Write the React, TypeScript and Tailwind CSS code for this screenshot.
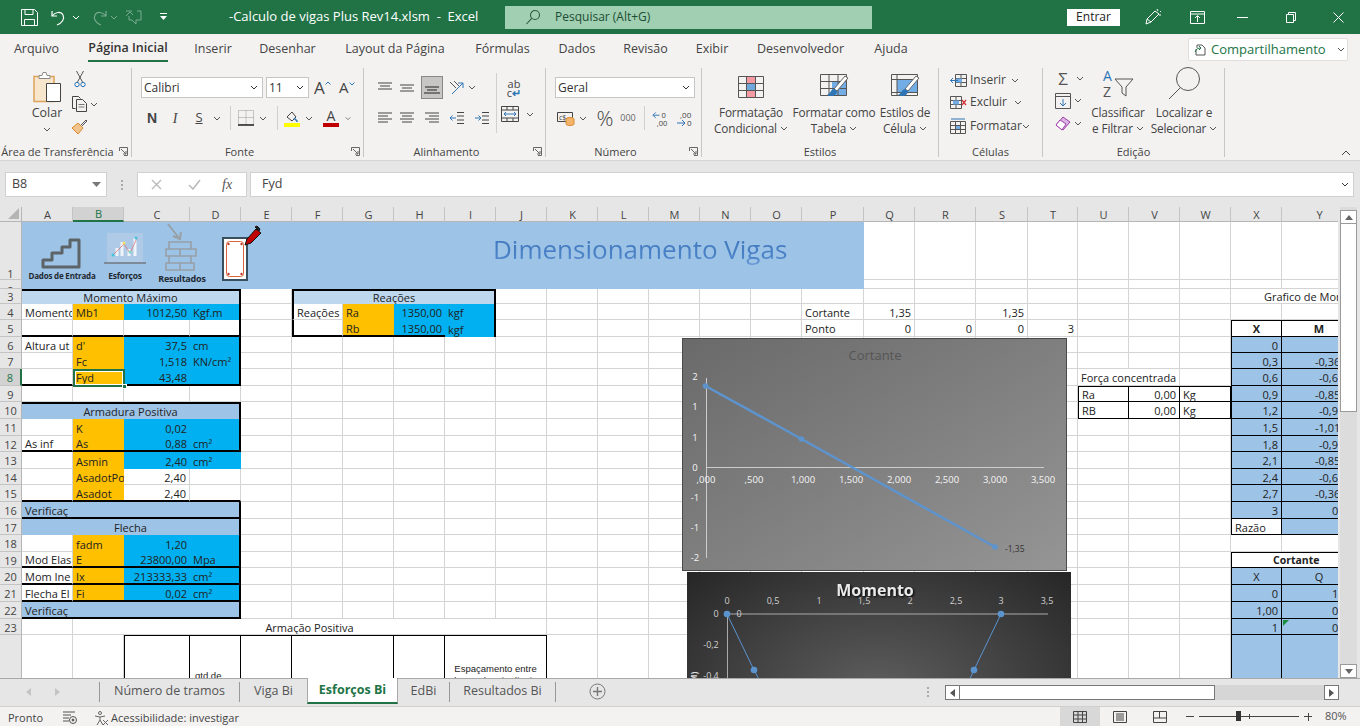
import React from 'react';

const Chev = ({ c = '#555' }: { c?: string }) => (
  <svg width="8" height="5" viewBox="0 0 8 5" fill="none"><path d="M1 1l3 3 3-3" stroke={c} strokeWidth="1" /></svg>
);

const L = ({ ys, xs, c = '#444' }: { ys: number[]; xs: [number, number][]; c?: string }) => (
  <svg width="16" height="14" viewBox="0 0 16 14" fill="none">
    {ys.map((y, i) => <path key={i} d={`M${xs[i][0]} ${y}H${xs[i][1]}`} stroke={c} strokeWidth="1" />)}
  </svg>
);

const Launcher = () => (
  <svg width="9" height="9" viewBox="0 0 9 9" fill="none" stroke="#666">
    <path d="M.5 4V.5h8v8H5" /><path d="M2 2l5 5M7 4v3H4" />
  </svg>
);

const Group = ({ w, label, launcher, children }: { w: string; label: string; launcher?: boolean; children: React.ReactNode }) => (
  <div className={`${w} h-[96px] pt-[3px] pb-[4px] shrink-0`}>
    <div className="relative h-full flex flex-col border-r border-r-[#c8c6c4]">
      <div className="h-[79px] flex">{children}</div>
      <div className={`h-[10px] leading-[10px] text-[11px] text-[#444] text-center whitespace-nowrap ${launcher ? 'pr-[16px]' : ''}`}>{label}</div>
      {launcher && <div className="absolute right-[3px] bottom-[1px]"><Launcher /></div>}
    </div>
  </div>
);

const Combo = ({ w, text }: { w: string; text: string }) => (
  <div className={`${w} h-[21px] bg-white border border-[#c8c6c4] flex items-center justify-between pl-[2px] pr-[4px] text-[12px] text-[#333]`}>
    <span>{text}</span><Chev c="#333" />
  </div>
);

const tabs: [string, string][] = [
  ['Arquivo', 'ml-[14px] w-[45px]'], ['Página Inicial', 'ml-[29px] w-[80px]'], ['Inserir', 'ml-[27px] w-[36px]'],
  ['Desenhar', 'ml-[29px] w-[55px]'], ['Layout da Página', 'ml-[30px] w-[100px]'], ['Fórmulas', 'ml-[31px] w-[53px]'],
  ['Dados', 'ml-[29px] w-[38px]'], ['Revisão', 'ml-[27px] w-[45px]'], ['Exibir', 'ml-[28px] w-[32px]'],
  ['Desenvolvedor', 'ml-[29px] w-[87px]'], ['Ajuda', 'ml-[30px] w-[34px]'],
];

const TitleBar = () => (
  <div className="h-[34px] bg-[#217346] flex items-center text-white shrink-0">
    <div className="ml-[21px] w-[17px]">
      <svg width="17" height="17" viewBox="0 0 17 17" fill="none" stroke="#fff"><path d="M.5.5h13l3 3v13H.5z" /><path d="M4 .5v5h8v-5M3.5 16.500v-6h10v6" /></svg>
    </div>
    <div className="ml-[12px] w-[20px]">
      <svg width="20" height="17" viewBox="0 0 20 17" fill="none" stroke="#fff" strokeWidth="1.200"><path d="M2 2v5h5" /><path d="M2 7c3-4 9-5 11-1s-1 8-6 10" /></svg>
    </div>
    <div className="ml-[2px] w-[10px]"><Chev c="#fff" /></div>
    <div className="ml-[8px] w-[18px] opacity-40">
      <svg width="18" height="17" viewBox="0 0 18 17" fill="none" stroke="#fff" strokeWidth="1.200"><path d="M16 2v5h-5" /><path d="M16 7c-3-4-9-5-11-1s1 8 6 10" /></svg>
    </div>
    <div className="ml-[2px] w-[10px] opacity-40"><Chev c="#fff" /></div>
    <div className="ml-[5px] w-[18px] opacity-40">
      <svg width="17" height="17" viewBox="0 0 17 17" fill="none" stroke="#fff"><path d="M1 2h6M12 2h4v9h-5v4l-4-4H4V7" /><path d="M1 7l4-4 3 3" /></svg>
    </div>
    <div className="ml-[16px] w-[12px]">
      <svg width="9" height="8" viewBox="0 0 9 8" fill="#fff"><path d="M1 0h7v1H1zM1 3h7L4.500 7z" /></svg>
    </div>
    <div className="ml-[58px] w-[222px] text-[13px] text-center whitespace-nowrap">-Calculo de vigas Plus Rev14.xlsm&nbsp; -&nbsp; Excel</div>
    <div className="ml-[54px] w-[367px] h-[23px] bg-[#a0cfb2] flex items-center text-[#1d4d33]">
      <div className="ml-[20px] w-[30px]">
        <svg width="16" height="16" viewBox="0 0 16 16" fill="none" stroke="#2c5a40" strokeWidth="1.100"><circle cx="10" cy="6" r="4.500" /><path d="M6.700 9.300L1.500 15" /></svg>
      </div>
      <span className="text-[12px]">Pesquisar (Alt+G)</span>
    </div>
    <div className="ml-[195px] w-[53px] h-[17px] bg-white text-[#222] text-[12px] flex items-center justify-center">Entrar</div>
    <div className="ml-[25px] w-[18px]">
      <svg width="17" height="18" viewBox="0 0 17 18" fill="none" stroke="#fff"><path d="M1 16l1-5 8-8 4 3-8 8z" /><path d="M2 11l4 3M12 1l1 2M15 4l1-1M14 7h2" /></svg>
    </div>
    <div className="ml-[27px] w-[16px]">
      <svg width="15" height="13" viewBox="0 0 15 13" fill="none" stroke="#fff"><path d="M.5.500h14v12H.5zM.5 3h14M7.500 11V5M5 7l2.500-2.500L10 7" /></svg>
    </div>
    <div className="ml-[31px] w-[11px] h-px bg-white"></div>
    <div className="ml-[38px] w-[10px]">
      <svg width="10" height="11" viewBox="0 0 10 11" fill="none" stroke="#fff"><path d="M.5 2.500h7v8h-7zM2.500 2.500V.5h7v8H7.500" /></svg>
    </div>
    <div className="ml-[37px] w-[11px]">
      <svg width="11" height="11" viewBox="0 0 11 11" fill="none" stroke="#fff"><path d="M.5.5l10 10M10.500.5l-10 10" /></svg>
    </div>
  </div>
);

const TabsRow = () => (
  <div className="h-[31px] bg-[#f3f2f1] flex items-start shrink-0 text-[12.5px] text-[#444]">
    {tabs.map(([t, c]) => (
      <div key={t} className={`${c} h-[28px] pt-[3px] flex items-center justify-center whitespace-nowrap ${t === 'Página Inicial' ? 'font-semibold text-[#333] border-b-[2px] border-b-[#217346]' : ''}`}>{t}</div>
    ))}
    <div className="ml-auto mr-[12px] mt-[4px] w-[160px] h-[23px] bg-white border border-[#e1dfdd] rounded-[2px] flex items-center text-[#217346]">
      <div className="ml-[5px] w-[17px]">
        <svg width="13" height="12" viewBox="0 0 13 12" fill="none" stroke="#555"><path d="M3 4V1h5l3 3v7H2V5" /><path d="M1 8c1-3 3-4 6-4M5 2l2 2-2 2" stroke="#217346" /></svg>
      </div>
      <span className="text-[13px] whitespace-nowrap w-[120px] pt-px">Compartilhamento</span>
      <div className="ml-[6px]"><Chev /></div>
    </div>
  </div>
);

const Clipboard = () => (
  <Group w="w-[132px]" label="Área de Transferência" launcher>
    <div className="ml-[22px] w-[50px] flex flex-col items-center pt-[4px]">
      <svg width="30" height="32" viewBox="0 0 30 32" fill="none">
        <path d="M2 4.500h20v25H2z" fill="#f8e6cc" stroke="#dba35b" strokeWidth="1.500" />
        <path d="M7 3.500h3l1-3h3l1 3h3v3H7z" fill="#fff" stroke="#888" />
        <path d="M14.500 11.500h14v18h-14z" fill="#fff" stroke="#444" />
      </svg>
      <div className="text-[12.5px] text-[#444] leading-[16px] mt-[1px]">Colar</div>
      <div className="mt-[6px]"><Chev /></div>
    </div>
    <div className="w-[30px] flex flex-col pt-[2px]">
      <div className="h-[20px] ml-[2px]">
        <svg width="12" height="18" viewBox="0 0 12 18" fill="none"><path d="M2.500 1l6 11M9.500 1l-6 11" stroke="#555" /><circle cx="3" cy="14.500" r="2.200" stroke="#2e75b6" /><circle cx="9" cy="14.500" r="2.200" stroke="#2e75b6" /></svg>
      </div>
      <div className="h-[25px] flex items-center gap-[3px] pt-[3px]">
        <svg width="15" height="16" viewBox="0 0 15 16" fill="none" stroke="#444"><path d="M3.500 12.500H.5v-12h6l2 2" /><path d="M4.500 3.500h6l4 4v8h-10z" /><path d="M6.500 8.500h6M6.500 11h6" stroke="#777" /></svg>
        <Chev />
      </div>
      <div className="h-[20px] mt-[4px] ml-[-1px]">
        <svg width="17" height="16" viewBox="0 0 17 16" fill="none"><path d="M1 9l6-5 5 5-5 6z" fill="#f1c48c" stroke="#d98a2e" /><path d="M10 6l5-5 1 1-5 5" stroke="#555" /></svg>
      </div>
    </div>
  </Group>
);

const Sep = ({ w }: { w: string }) => <div className={`${w} flex justify-center`}><div className="w-px h-[24px] bg-[#d2d0ce]"></div></div>;

const Fonte = () => (
  <Group w="w-[232px]" label="Fonte" launcher>
    <div className="flex flex-col ml-[9px] pt-[9px]">
      <div className="flex items-center">
        <Combo w="w-[122px]" text="Calibri" />
        <div className="ml-[3px]"><Combo w="w-[43px]" text="11" /></div>
        <div className="ml-[5px] w-[25px] flex items-start text-[17px] leading-none text-[#444]"><span>A</span><svg className="mt-[2px]" width="6" height="4" viewBox="0 0 6 4" fill="none" stroke="#2e75b6"><path d="M.5 3.500L3 1l2.500 2.500" /></svg></div>
        <div className="w-[20px] flex items-start text-[15px] leading-none text-[#444]"><span>A</span><svg className="mt-[2px]" width="6" height="4" viewBox="0 0 6 4" fill="none" stroke="#2e75b6"><path d="M.5.500L3 3 5.500.5" /></svg></div>
      </div>
      <div className="flex items-center h-[24px] mt-[8px] text-[#444]">
        <div className="w-[22px] text-center font-bold text-[14px] font-['Liberation_Sans',sans-serif]">N</div>
        <div className="w-[24px] text-center italic text-[14px] font-['Liberation_Serif',serif]">I</div>
        <div className="w-[24px] text-center underline text-[13px]">S</div>
        <div className="w-[12px] flex justify-center"><Chev /></div>
        <Sep w="w-[14px]" />
        <div className="w-[18px] flex justify-center">
          <svg width="16" height="16" viewBox="0 0 16 16" fill="none"><path d="M.5.5h15v14H.5zM8 .5v14M.5 7.500h15" stroke="#999" strokeDasharray="1 1" /><path d="M0 15h16" stroke="#222" strokeWidth="1.500" /></svg>
        </div>
        <div className="w-[16px] flex justify-center"><Chev /></div>
        <Sep w="w-[12px]" />
        <div className="w-[18px] flex justify-center">
          <svg width="16" height="17" viewBox="0 0 16 17" fill="none"><path d="M3 7l5-5 4 5-4 4z" stroke="#444" /><path d="M10 8l3 3v1" stroke="#2e75b6" strokeWidth="1.500" /><path d="M0 13h16v4H0z" fill="#ffff00" /></svg>
        </div>
        <div className="w-[16px] flex justify-center"><Chev /></div>
        <div className="w-[28px] flex flex-col items-center leading-[12px]">
          <span className="text-[14px]">A</span>
          <div className="w-[16px] h-[4px] bg-[#c00000] mt-[1px]"></div>
        </div>
        <div className="w-[6px] flex justify-center"><Chev /></div>
      </div>
    </div>
  </Group>
);

const Box = ({ children, sel }: { children: React.ReactNode; sel?: boolean }) => (
  <div className={`w-[22px] h-[23px] flex items-center justify-center ${sel ? 'bg-[#c8c6c4] border border-[#8a8886]' : ''}`}>{children}</div>
);

const arrowIndent = (dir: number) => (
  <svg width="16" height="14" viewBox="0 0 16 14" fill="none">
    <path d="M9 1.500h7M9 5h7M9 9h7M9 12.500h7" stroke="#444" transform="translate(-1 0)" />
    {dir < 0 ? <path d="M7 7H1M3.500 4.500L1 7l2.500 2.500" stroke="#2e75b6" /> : <path d="M1 7h6M4.500 4.500L7 7l-2.500 2.500" stroke="#2e75b6" />}
  </svg>
);

const Alinhamento = () => (
  <Group w="w-[182px]" label="Alinhamento" launcher>
    <div className="flex ml-[10px] pt-[8px]">
      <div className="w-[122px] flex flex-col">
        <div className="flex items-center">
          <Box><L ys={[2, 5, 8]} xs={[[1, 15], [3, 13], [1, 15]]} /></Box>
          <Box><L ys={[4, 7, 10]} xs={[[1, 15], [3, 13], [1, 15]]} /></Box>
          <div className="ml-[3px]"><Box sel><L ys={[6, 9, 12]} xs={[[1, 15], [3, 13], [0, 16]]} c="#222" /></Box></div>
          <div className="ml-[3px]"><Box>
            <svg width="18" height="16" viewBox="0 0 18 16" fill="none"><path d="M2 2l6 6M6 1l6 6" stroke="#555" /><path d="M4 14L15 3M10 3h5v5" stroke="#2e75b6" /></svg>
          </Box></div>
          <div className="w-[8px] flex justify-center"><Chev /></div>
        </div>
        <div className="flex items-center mt-[7px]">
          <Box><L ys={[2, 5, 8, 11]} xs={[[1, 15], [1, 11], [1, 15], [1, 11]]} /></Box>
          <Box><L ys={[2, 5, 8, 11]} xs={[[1, 15], [3, 13], [1, 15], [3, 13]]} /></Box>
          <div className="ml-[3px]"><Box><L ys={[2, 5, 8, 11]} xs={[[1, 15], [5, 15], [1, 15], [5, 15]]} /></Box></div>
          <div className="ml-[3px]"><Box>{arrowIndent(-1)}</Box></div>
          <div className="ml-[3px]"><Box>{arrowIndent(1)}</Box></div>
        </div>
      </div>
      <div className="w-px h-[60px] bg-[#d2d0ce] mt-[-3px]"></div>
      <div className="flex flex-col">
        <div className="ml-[6px] w-[22px] h-[23px] flex items-center justify-center">
          <div className="relative text-[11px] leading-[9px] text-[#444] text-center">
            <div>ab</div><div className="text-left">c<span className="text-[#2e75b6] font-bold">↵</span></div>
          </div>
        </div>
        <div className="flex items-center mt-[7px] ml-[3px]">
          <div className="w-[20px] flex justify-center">
            <svg width="18" height="16" viewBox="0 0 18 16" fill="none" stroke="#444"><path d="M.5.500h17v15H.5zM.5 4h17M.5 12h17M6 .5V4M12 .5V4M6 12v3.500M12 12v3.500" /><path d="M3 8h12M5 6L3 8l2 2M13 6l2 2-2 2" stroke="#2e75b6" /></svg>
          </div>
          <div className="w-[20px] flex justify-center"><Chev /></div>
        </div>
      </div>
    </div>
  </Group>
);

const Numero = () => (
  <Group w="w-[156px]" label="Número" launcher>
    <div className="flex flex-col ml-[9px] pt-[9px] text-[#444]">
      <Combo w="w-[140px]" text="Geral" />
      <div className="flex items-center h-[24px] mt-[8px]">
        <div className="w-[21px] flex justify-center">
          <svg width="18" height="15" viewBox="0 0 18 15" fill="none"><path d="M.5 1.500h15v9H.5z" stroke="#444" /><text x="2" y="9" fontSize="7" fill="#444" fontFamily="Open Sans">c$</text><ellipse cx="13" cy="8" rx="4" ry="1.500" fill="#f2b56b" stroke="#d98a2e" /><path d="M9 8v5c0 2 8 2 8 0V8" fill="#f2b56b" stroke="#d98a2e" /></svg>
        </div>
        <div className="w-[14px] flex justify-center"><Chev /></div>
        <div className="w-[30px] text-center text-[21px] leading-none font-light">%</div>
        <div className="w-[16px] text-center text-[9px] text-[#666]">000</div>
        <Sep w="w-[16px]" />
        <div className="w-[16px] flex justify-center">
          <svg width="17" height="17" viewBox="0 0 17 17" fill="none"><path d="M8 5H1M4 2L1 5l3 3" stroke="#2e75b6" /><text x="10" y="8" fontSize="8" fill="#444" fontFamily="Open Sans">0</text><text x="5" y="16" fontSize="8" fill="#444" fontFamily="Open Sans">,00</text></svg>
        </div>
        <div className="w-[34px] flex justify-center">
          <svg width="17" height="17" viewBox="0 0 17 17" fill="none"><path d="M0 13h8M5 10l3 3-3 3" stroke="#2e75b6" /><text x="3" y="8" fontSize="8" fill="#444" fontFamily="Open Sans">,00</text><text x="10" y="16" fontSize="8" fill="#444" fontFamily="Open Sans">0</text></svg>
        </div>
      </div>
    </div>
  </Group>
);

const BigBtn = ({ w, a, b, icon }: { w: string; a: string; b: string; icon: React.ReactNode }) => (
  <div className={`${w} flex flex-col items-center text-[11.8px] tracking-[-0.15px] text-[#444] leading-[16px] whitespace-nowrap`}>
    <div className="h-[32px] flex items-end justify-center">{icon}</div>
    <div className="mt-[4px]">{a}</div>
    <div className="flex items-center gap-[3px]">{b}<Chev /></div>
  </div>
);

const Tgrid = ({ children }: { children?: React.ReactNode }) => (
  <svg width="30" height="26" viewBox="0 0 30 26" fill="none">
    {children}
    <path d="M2.500 2.500h25v21h-25zM2.500 9.500h25M2.500 16.500h25M10.500 2.500v21M19.500 2.500v21" stroke="#555" />
  </svg>
);

const Brush = () => <><path d="M30 6L19 19l-3-2L27 4z" fill="#fff" stroke="#666" /><path d="M16 17c-3 0-3 4-7 6 4 2 10 1 10-4z" fill="#2e75b6" /></>;

const Estilos = () => (
  <Group w="w-[237px]" label="Estilos">
    <div className="flex ml-[11px]">
      <BigBtn w="w-[76px]" a="Formatação" b="Condicional" icon={
        <Tgrid><path d="M10.500 2.500h9v7h-9z" fill="#f49aa3" /><path d="M10.500 16.500h9v7h-9z" fill="#f49aa3" /><path d="M10.500 9.500h9v7h-9z" fill="#6ea8dc" /></Tgrid>
      } />
      <BigBtn w="w-[90px]" a="Formatar como" b="Tabela" icon={
        <svg width="32" height="28" viewBox="0 0 32 28" fill="none"><path d="M14 9.500h15v14H14z" fill="#72ade6" /><path d="M2.500 2.500h26v21h-26zM2.500 9.500h26M2.500 16.500h26M11 2.500v21M20 2.500v21" stroke="#555" /><Brush /></svg>
      } />
      <BigBtn w="w-[52px]" a="Estilos de" b="Célula" icon={
        <svg width="32" height="28" viewBox="0 0 32 28" fill="none"><path d="M8 7.500h20v13H8z" fill="#72ade6" /><path d="M2.500 2.500h26v21h-26zM2.500 7.500h26M2.500 20.500h26M8 2.500v21" stroke="#555" /><Brush /></svg>
      } />
    </div>
  </Group>
);

const Celulas = () => (
  <Group w="w-[104px]" label="Células">
    <div className="flex flex-col ml-[11px] pt-px text-[12px] text-[#444]">
      <div className="h-[22px] flex items-center">
        <div className="w-[20px]"><svg width="17" height="13" viewBox="0 0 17 13" fill="none"><path d="M5.500.5h11v12h-11zM11 .5v12M5.500 4.500h11M5.500 8.500h11" stroke="#555" /><path d="M6 4.500h6v4H6z" fill="#72ade6" /><path d="M8 6.500H.5M3 4L.5 6.500 3 9" stroke="#2e75b6" /></svg></div>
        <span className="w-[41px]">Inserir</span><Chev />
      </div>
      <div className="h-[22px] flex items-center">
        <div className="w-[20px]"><svg width="17" height="13" viewBox="0 0 17 13" fill="none"><path d="M.5.5h11v12H.5zM.5 4.500h11M.5 8.500h11M6 .5v12" stroke="#555" /><path d="M3 4.500h6v4H3z" fill="#72ade6" /><path d="M12 4l4 5M16 4l-4 5" stroke="#d13438" strokeWidth="1.300" /></svg></div>
        <span className="w-[44px]">Excluir</span><Chev />
      </div>
      <div className="h-[24px] flex items-center mt-[1px]">
        <div className="w-[20px]"><svg width="16" height="16" viewBox="0 0 16 16" fill="none"><path d="M.5 3.500h15v12H.5zM5.500 3.500v12M10.500 3.500v12M.5 7.500h15M.5 11.500h15" stroke="#555" /><path d="M6 8h4v3H6z" fill="#72ade6" /><path d="M1 1h14" stroke="#2e75b6" /></svg></div>
        <span className="w-[52px]">Formatar</span><Chev />
      </div>
    </div>
  </Group>
);

const Edicao = () => (
  <Group w="w-[182px]" label="Edição">
    <div className="flex">
      <div className="ml-[12px] w-[33px] flex flex-col">
        <div className="h-[21px] flex items-center gap-[5px]">
          <span className="w-[16px] text-[17px] leading-none text-[#555] text-center">Σ</span><Chev />
        </div>
        <div className="h-[23px] flex items-center gap-[3px]">
          <svg width="16" height="16" viewBox="0 0 16 16" fill="none"><path d="M.5.5h15v15H.5zM.5 3.500h15" stroke="#555" /><path d="M8 6v7M5 10l3 3 3-3" stroke="#2e75b6" /></svg><Chev />
        </div>
        <div className="h-[23px] flex items-center gap-[3px]">
          <svg width="16" height="15" viewBox="0 0 16 15" fill="none"><path d="M1 9l7-8 7 5-7 8z" fill="#d8b4e2" stroke="#a13ea8" /><path d="M1 9l6 5 4-6-6-4z" fill="#fff" stroke="#a13ea8" /></svg><Chev />
        </div>
      </div>
      <div className="flex">
        <BigBtn w="w-[60px]" a="Classificar" b="e Filtrar" icon={
          <svg width="36" height="32" viewBox="0 0 36 32" fill="none"><text x="3" y="13" fontSize="14" fill="#2e75b6" fontFamily="Open Sans">A</text><text x="3" y="29" fontSize="14" fill="#555" fontFamily="Open Sans">Z</text><path d="M15 11h18l-7 8v9l-4-3v-6z" stroke="#555" /></svg>
        } />
        <div className="w-[4px]"></div>
        <BigBtn w="w-[64px]" a="Localizar e" b="Selecionar" icon={
          <svg width="34" height="34" viewBox="0 0 34 34" fill="none" stroke="#555"><circle cx="21" cy="13" r="11.500" /><path d="M13 22L2 33" /></svg>
        } />
      </div>
    </div>
  </Group>
);

const Ribbon = () => (
  <div className="relative h-[96px] bg-[#f3f2f1] border-b border-b-[#d8d6d4] flex shrink-0">
    <Clipboard /><Fonte /><Alinhamento /><Numero /><Estilos /><Celulas /><Edicao />
    <div className="absolute right-[9px] bottom-[4px]"><svg width="10" height="6" viewBox="0 0 10 6" fill="none" stroke="#444"><path d="M1 5l4-4 4 4" /></svg></div>
  </div>
);

const FormulaBar = () => (
  <div className="h-[46px] bg-[#e6e6e6] flex items-start pt-[11px] pl-[5px] shrink-0 text-[#444]">
    <div className="w-[102px] h-[25px] bg-white border border-[#d2d0ce] flex items-center justify-between pl-[6px] pr-[5px] text-[12.5px]">
      <span>B8</span>
      <svg width="9" height="5" viewBox="0 0 9 5" fill="#777"><path d="M0 0h9L4.500 5z" /></svg>
    </div>
    <div className="w-[30px] h-[25px] flex flex-col items-center justify-center gap-[2px]">
      <div className="w-[2px] h-[2px] bg-[#aaa]"></div><div className="w-[2px] h-[2px] bg-[#aaa]"></div><div className="w-[2px] h-[2px] bg-[#aaa]"></div>
    </div>
    <div className="w-[110px] h-[25px] bg-white border border-[#d2d0ce] flex items-center">
      <div className="ml-[13px] w-[11px]"><svg width="11" height="11" viewBox="0 0 11 11" fill="none" stroke="#bbb" strokeWidth="1.400"><path d="M1 1l9 9M10 1l-9 9" /></svg></div>
      <div className="ml-[26px] w-[12px]"><svg width="13" height="11" viewBox="0 0 13 11" fill="none" stroke="#bbb" strokeWidth="1.600"><path d="M1 6l4 4 7-9" /></svg></div>
      <div className="ml-[22px] italic text-[14px] font-['Liberation_Serif',serif] text-[#555]">fx</div>
    </div>
    <div className="ml-[3px] w-[1104px] h-[25px] bg-white border border-[#d2d0ce] flex items-center justify-between pl-[11px] pr-[4px] text-[12.5px]">
      <span>Fyd</span><Chev c="#333" />
    </div>
  </div>
);

type Edge = 'g' | 'k' | 't' | 'n';
type Cell = { t?: React.ReactNode; bg?: string; al?: 'r' | 'c'; r?: Edge; b?: Edge; top?: Edge; left?: Edge; span?: number; rows?: number; x?: string; skip?: boolean };

const rEdge: Record<Edge, string> = { g: 'border-r border-r-[#d4d4d4]', k: 'border-r-2 border-r-black', t: 'border-r border-r-black', n: '' };
const bEdge: Record<Edge, string> = { g: 'border-b border-b-[#d4d4d4]', k: 'border-b-2 border-b-black', t: 'border-b border-b-black', n: '' };
const tEdge: Record<Edge, string> = { g: '', k: 'border-t-2 border-t-black', t: 'border-t border-t-black', n: '' };
const lEdge: Record<Edge, string> = { g: '', k: 'border-l-2 border-l-black', t: 'border-l border-l-black', n: '' };

const cols = 'ABCDEFGHIJKLMNOPQRSTUVWXY'.split('');
const cells: Record<string, Cell> = {};
const s = (ref: string, c: Cell) => {
  cells[ref] = { ...cells[ref], ...c };
  if (c.span || c.rows) {
    const ci = cols.indexOf(ref[0]);
    const ri = parseInt(ref.slice(1));
    for (let y = 0; y < (c.rows || 1); y++) for (let x = 0; x < (c.span || 1); x++) {
      if (x || y) cells[cols[ci + x] + (ri + y)] = { skip: true };
    }
  }
};

const OR = 'bg-[#ffc000]';
const CY = 'bg-[#00b0f0]';
const H1 = 'bg-[#bdd7ee]';
const H2 = 'bg-[#9dc3e6]';

const leftRow = (r: number, a: string, b: string, c: string, d: string, o: { bot?: boolean; white?: boolean; noR?: boolean; blank?: boolean } = {}) => {
  const bot: Edge | undefined = o.bot ? 'k' : undefined;
  s('A' + r, { t: a, b: bot });
  s('B' + r, o.blank ? { b: bot } : { t: b, bg: OR, b: bot || 'n' });
  s('C' + r, o.blank || o.white ? { t: c, al: 'r', b: bot } : { t: c, al: 'r', bg: CY, b: bot || 'n' });
  s('D' + r, o.blank || o.white ? { t: d, b: bot, r: o.noR ? 'g' : 'k' } : { t: d, bg: CY, b: bot || 'n', r: o.noR ? 'n' : 'k' });
};

s('A1', { span: 16, rows: 2, bg: H2, x: 'pl-[471px]', t: (
  <span className="text-[26px] leading-none bg-linear-to-b from-[#3f76bb] via-[#4a82c8] to-[#8fb6e0] bg-clip-text text-transparent pb-[14px]">Dimensionamento Vigas</span>
) });

s('A3', { span: 4, bg: H1, al: 'c', t: 'Momento Máximo', top: 'k', r: 'k' });
leftRow(4, 'Momento', 'Mb1', '1012,50', 'Kgf.m');
leftRow(5, '', '', '', '', { blank: true, bot: true });
leftRow(6, 'Altura ut', "d'", '37,5', 'cm');
leftRow(7, '', 'Fc', '1,518', 'KN/cm²');
leftRow(8, '', 'Fyd', '43,48', '', { bot: true });
s('A10', { span: 4, bg: H2, al: 'c', t: 'Armadura Positiva', top: 'k', r: 'k' });
leftRow(11, '', 'K', '0,02', '');
leftRow(12, 'As inf', 'As', '0,88', 'cm²', { bot: true });
leftRow(13, '', 'Asmin', '2,40', 'cm²', { noR: true });
leftRow(14, '', 'AsadotPo', '2,40', '', { white: true, noR: true });
leftRow(15, '', 'Asadot', '2,40', '', { white: true, noR: true, bot: true });
s('A16', { span: 4, bg: H2, t: 'Verificaç', r: 'k', b: 'k' });
s('A17', { span: 4, bg: H2, al: 'c', t: 'Flecha', r: 'k' });
leftRow(18, '', 'fadm', '1,20', '');
leftRow(19, 'Mod Elas', 'E', '23800,00', 'Mpa', { bot: true });
leftRow(20, 'Mom Ine', 'Ix', '213333,33', 'cm²', { bot: true });
leftRow(21, 'Flecha El', 'Fi', '0,02', 'cm²', { bot: true });
s('A22', { span: 4, bg: H2, t: 'Verificaç', r: 'k', b: 'k' });

s('F3', { span: 4, bg: H1, al: 'c', t: 'Reações', top: 'k', r: 'k', left: 'k' });
s('F4', { t: 'Reações', left: 'k' });
s('G4', { t: 'Ra', bg: OR });
s('H4', { t: '1350,00', al: 'r', bg: CY });
s('I4', { t: 'kgf', bg: CY, r: 'k' });
s('F5', { left: 'k', b: 'k' });
s('G5', { t: 'Rb', bg: OR, b: 'k' });
s('H5', { t: '1350,00', al: 'r', bg: CY, b: 'k' });
s('I5', { t: 'kgf', bg: CY, r: 'k' });

s('B23', { span: 9, al: 'c', t: 'Armação Positiva' });
const smallT = (a: string, b: string, pad: string) => (
  <div className={`w-full self-start whitespace-normal text-center leading-[12px] text-[9.5px] font-['Liberation_Sans',sans-serif] ${pad}`}>{a}<br />{b}</div>
);
s('C24', { left: 't', top: 't', r: 't' });
s('D24', { top: 't', r: 't', x: 'px-0', t: <div className="w-full self-start whitespace-normal text-left pl-[2px] leading-[12px] text-[9.5px] font-['Liberation_Sans',sans-serif] pt-[34px]">qtd de<br />barras</div> });
s('E24', { top: 't', r: 't' });
s('F24', { span: 2, top: 't', r: 't' });
s('H24', { top: 't', r: 't' });
s('I24', { span: 2, top: 't', r: 't', t: smallT('Espaçamento entre', 'barras longitudinais', 'pt-[27px]') });

s('P4', { t: 'Cortante' });
s('Q4', { t: '1,35', al: 'r' });
s('S4', { t: '1,35', al: 'r' });
s('P5', { t: 'Ponto' });
s('Q5', { t: '0', al: 'r' });
s('R5', { t: '0', al: 'r' });
s('S5', { t: '0', al: 'r' });
s('T5', { t: '3', al: 'r' });

s('U8', { span: 2, t: 'Força concentrada' });
s('U9', { t: 'Ra', left: 't', top: 't', r: 't', b: 't' });
s('V9', { t: '0,00', al: 'r', top: 't', r: 't', b: 't' });
s('W9', { t: 'Kg', top: 't', r: 't', b: 't' });
s('U10', { t: 'RB', left: 't', r: 't', b: 't' });
s('V10', { t: '0,00', al: 'r', r: 't', b: 't' });
s('W10', { t: 'Kg', r: 't', b: 't' });

s('X3', { span: 2, t: 'Grafico de Momento', x: 'pl-[33px]' });
s('X5', { t: <b>X</b>, al: 'c', left: 't', top: 't', r: 't', b: 't' });
s('Y5', { t: <b>M</b>, al: 'c', top: 't', r: 't', b: 't' });
const xs = ['0', '0,3', '0,6', '0,9', '1,2', '1,5', '1,8', '2,1', '2,4', '2,7', '3'];
const ys: [string, string][] = [['', ''], ['-0,36', 'pl-[33px]'], ['-0,63', 'pl-[37px]'], ['-0,85', 'pl-[33px]'], ['-0,97', 'pl-[37px]'], ['-1,01', 'pl-[33px]'], ['-0,97', 'pl-[37px]'], ['-0,85', 'pl-[33px]'], ['-0,63', 'pl-[37px]'], ['-0,36', 'pl-[33px]'], ['0,00', 'pl-[50px]']];
xs.forEach((v, i) => {
  const r = 6 + i;
  s('X' + r, { t: v, al: 'r', bg: H2, left: 't', r: 't', b: 't' });
  s('Y' + r, { t: ys[i][0], bg: H2, r: 't', b: 't', x: ys[i][1] });
});
s('X17', { t: 'Razão', left: 't', r: 't', b: 't' });
s('Y17', { bg: H2, r: 't', b: 't' });
s('X19', { span: 2, top: 't', left: 't', b: 't', x: 'pl-[41px]', t: <b className="text-[10.500px]">Cortante</b> });
s('X20', { t: 'X', al: 'c', bg: H2, left: 't', r: 't', b: 't' });
s('Y20', { t: 'Q', al: 'c', bg: H2, r: 't', b: 't' });
s('X21', { t: '0', al: 'r', bg: H2, left: 't', r: 't', b: 't' });
s('Y21', { t: '1,35', bg: H2, r: 't', b: 't', x: 'pl-[50px]' });
s('X22', { t: '1,00', al: 'r', bg: H2, left: 't', r: 't', b: 't' });
s('Y22', { t: '0,00', bg: H2, r: 't', b: 't', x: 'pl-[50px]' });
s('X23', { t: '1', al: 'r', bg: H2, left: 't', r: 't', b: 't' });
s('Y23', { t: '0,00', bg: H2, r: 't', b: 't', x: 'pl-[50px]' });
s('X24', { bg: H2, left: 't', r: 't' });
s('Y24', { bg: H2 });

const renderCell = (ref: string) => {
  const c = cells[ref] || {};
  if (c.skip) return null;
  const bgd = !!c.bg;
  const r = c.r || (bgd ? 'n' : 'g');
  const b = c.b || (bgd ? 'n' : 'g');
  const just = c.al === 'r' ? 'justify-end' : c.al === 'c' ? 'justify-center' : 'justify-start';
  const style = c.span || c.rows ? { gridColumn: `span ${c.span || 1}`, gridRow: `span ${c.rows || 1}` } : undefined;
  return (
    <div key={ref} style={style} className={`flex items-center min-w-0 overflow-hidden whitespace-nowrap px-[3px] ${c.top ? '' : 'pt-px'} ${c.bg || ''} ${rEdge[r]} ${bEdge[b]} ${c.top ? tEdge[c.top] : ''} ${c.left ? lEdge[c.left] : ''} ${just} ${c.x || ''}`}>
      {c.t}
    </div>
  );
};

const Overlay = () => (
  <>
    <div className="absolute left-[73px] top-[162px] w-[52px] h-[18px] border-2 border-[#217346] outline outline-1 -outline-offset-3 outline-white pointer-events-none"></div>
    <div className="absolute left-[122px] top-[177px] w-[5px] h-[5px] bg-[#217346] border border-white"></div>
    <div className="absolute left-[40px] top-[30px]">
      <svg width="42" height="34" viewBox="0 0 42 34" fill="none"><path d="M3 30h36V3h-9v7h-8v6H12v7H3z" stroke="#5d6468" strokeWidth="3" strokeLinejoin="round" /></svg>
    </div>
    <div className="absolute left-[27px] top-[63px] w-[70px] text-center text-[8px] font-bold text-[#222a33] whitespace-nowrap tracking-[-0.2px]">Dados de Entrada</div>
    <div className="absolute left-[104px] top-[25px]">
      <svg width="42" height="36" viewBox="0 0 42 36" fill="none">
        <path d="M3 1h36v29H3z" fill="#b9cee6" opacity=".6" />
        <path d="M13 24v-8M18 24V10M25 24V17M31 24V6" stroke="#eef4fa" strokeWidth="3" />
        <path d="M8 24l12-12 6 9 7-15" stroke="#e06a6a" strokeWidth="1" opacity=".7" />
        <circle cx="9" cy="23" r="1.500" fill="#41c4e0" /><circle cx="20" cy="11" r="1.500" fill="#f2e26b" /><circle cx="26" cy="20" r="1.500" fill="#7fd7c4" /><circle cx="32" cy="6" r="1.500" fill="#41c4e0" />
        <path d="M0 31h42" stroke="#7d8a99" strokeWidth="2" />
      </svg>
    </div>
    <div className="absolute left-[105px] top-[63px] w-[40px] text-center text-[8.5px] font-bold text-[#222a33] whitespace-nowrap tracking-[-0.2px]">Esforços</div>
    <div className="absolute left-[163px] top-[15px]">
      <svg width="36" height="50" viewBox="0 0 36 50" fill="none">
        <path d="M5 2l11 14M10 14l7 3 1-7" stroke="#98a0a8" strokeWidth="2" />
        <path d="M6 20h22v7H6zM3 27h14v7H3zM17 27h16v7H17zM6 34h22v7H6zM3 41h14v7H3zM17 41h14v7H17z" stroke="#98a0a8" strokeWidth="1.600" />
      </svg>
    </div>
    <div className="absolute left-[155px] top-[65px] w-[54px] text-center text-[9px] font-bold text-[#222a33] whitespace-nowrap tracking-[-0.2px]">Resultados</div>
    <div className="absolute left-[221px] top-[17px]">
      <svg width="40" height="58" viewBox="0 0 40 58" fill="none">
        <path d="M2 14h24v42H2z" fill="#fff" stroke="#3a505f" strokeWidth="2" />
        <rect x="5.500" y="17.500" width="17" height="35" rx="3" stroke="#d9663a" />
        <circle cx="7.500" cy="20" r="1.200" fill="#c03a2a" /><circle cx="20.500" cy="20" r="1.200" fill="#c03a2a" /><circle cx="7.500" cy="50" r="1.200" fill="#c03a2a" /><circle cx="20.500" cy="50" r="1.200" fill="#c03a2a" />
        <path d="M24 21l2-6 9-10 5 4-10 10z" fill="#c00000" stroke="#111" />
        <path d="M34 3l2-1 3 3-1 2z" fill="#222" stroke="#111" />
      </svg>
    </div>
    <div className="absolute left-[1283px] top-[413px]">
      <svg width="6" height="6" viewBox="0 0 6 6"><path d="M0 0h6L0 6z" fill="#1e8e3e" /></svg>
    </div>
  </>
);

const Chart1 = () => {
  const yt = [[377, '2'], [407, '1'], [438, '1'], [468, '0'], [498, '-1'], [528, '-1'], [558, '-2']] as [number, string][];
  const xt = [[706, ',000'], [754, ',500'], [803, '1,000'], [851, '1,500'], [899, '2,000'], [947, '2,500'], [995, '3,000'], [1043, '3,500']] as [number, string][];
  return (
    <div className="absolute left-[682px] top-[131px] w-[385px] h-[233px] border border-[#4a4a4a] bg-linear-to-br from-[#6a6a6a] to-[#959595] overflow-hidden">
      <svg width="385" height="233" viewBox="683 339 385 233" fontFamily="Open Sans">
        <text x="875" y="360" fontSize="13" fill="#555" textAnchor="middle">Cortante</text>
        <path d="M706.500 378V558M707 467.500H1044" stroke="#ccc" strokeWidth="1" />
        {yt.map(([y, t], i) => <text key={i} x="695" y={y + 3} fontSize="9.500" fill="#f5f5f5" textAnchor="middle">{t}</text>)}
        {xt.map(([x, t]) => <text key={x} x={x} y={483} fontSize="9.500" fill="#f5f5f5" textAnchor="middle">{t}</text>)}
        <path d="M705.500 386L801.500 439L995 547" stroke="#5d94ce" strokeWidth="2.500" fill="none" />
        <circle cx="705.500" cy="386" r="2.800" fill="#5d94ce" /><circle cx="801.500" cy="439" r="2.800" fill="#5d94ce" /><circle cx="995" cy="547" r="2.800" fill="#5d94ce" />
        <text x="1005" y="552" fontSize="8.500" fill="#333">-1,35</text>
      </svg>
    </div>
  );
};

const Chart2 = () => {
  const xt = [[727, '0'], [773, '0,5'], [819, '1'], [864, '1,5'], [910, '2'], [956, '2,5'], [1001, '3'], [1047, '3,5']] as [number, string][];
  return (
    <div className="absolute left-[687px] top-[365px] w-[384px] h-[240px] bg-[radial-gradient(ellipse_at_center,#5e5e5e_0%,#262626_100%)] overflow-hidden">
      <svg width="384" height="240" viewBox="687 572 384 240" fontFamily="Open Sans">
        <path d="M727 614H1048M727.500 614V812" stroke="#aaa" strokeWidth="1" />
        {xt.map(([x, t]) => <text key={x} x={x} y={604} fontSize="9" fill="#d0d0d0" textAnchor="middle">{t}</text>)}
        <text x="875" y="596" fontSize="16" fontWeight="700" fill="#eaeaea" textAnchor="middle" className="drop-shadow-[1px_1px_1px_#000]">Momento</text>
        <text x="716" y="617" fontSize="9" fill="#d0d0d0" textAnchor="middle">0</text>
        <text x="739" y="617" fontSize="9" fill="#d0d0d0" textAnchor="middle">0</text>
        <text x="711" y="648" fontSize="9" fill="#d0d0d0" textAnchor="middle">-0,2</text>
        <text x="711" y="679" fontSize="9" fill="#d0d0d0" textAnchor="middle">-0,4</text>
        <text transform="translate(697 668) rotate(-90)" fontSize="8.500" fontWeight="700" fill="#ddd" textAnchor="start" dx="-32">(kN.M)</text>
        <path d="M727 614L754 670L770 700M1001 614L974 670L960 700" stroke="#5b93cf" strokeWidth="1" fill="none" />
        <circle cx="727" cy="614" r="3.300" fill="#5b93cf" /><circle cx="754" cy="670" r="3.300" fill="#5b93cf" /><circle cx="974" cy="670" r="3.300" fill="#5b93cf" /><circle cx="1001" cy="614" r="3.300" fill="#5b93cf" />
      </svg>
    </div>
  );
};

const Sheet = () => {
  const rows = Array.from({ length: 24 }, (_, i) => i + 1);
  return (
    <div className="relative h-[471px] shrink-0 flex bg-[#e6e6e6]">
      <div className="relative w-[1338px] h-[471px] overflow-hidden bg-white">
        <div className="grid w-[1358px] grid-cols-[22px_51px_51px_66px_51px_51px_51px_51px_51px_51px_51px_51px_51px_51px_51px_51px_62px_51px_61px_52px_50px_51px_51px_51px_51px_75px] grid-rows-[15px_58px_9px_15px_16px_17px_16px_16px_17px_16px_17px_17px_16px_17px_16px_17px_17px_16px_17px_16px_17px_17px_17px_16px_100px] text-[11px] text-[#222] font-['Open_Sans',sans-serif] leading-none">
          <div className="bg-[#e6e6e6] border-r border-b border-[#b5b5b5] flex items-end justify-end p-[2px]">
            <svg width="11" height="11" viewBox="0 0 11 11"><path d="M11 0v11H0z" fill="#b5b5b5" /></svg>
          </div>
          {cols.map(c => (
            <div key={c} className={`flex items-center justify-center pl-px border-r border-r-[#c4c4c4] ${c === 'B' ? 'bg-[#d2d2d2] text-[#217346] border-b-2 border-b-[#217346]' : 'bg-[#e6e6e6] text-[#444] border-b border-b-[#b5b5b5]'}`}>{c}</div>
          ))}
          {rows.map(r => (
            <React.Fragment key={r}>
              <div className={`flex justify-center overflow-hidden border-b border-b-[#c4c4c4] ${r === 1 ? 'items-end' : r === 2 ? 'items-start pt-[5px]' : 'items-center pt-px'} ${r === 8 ? 'bg-[#d2d2d2] text-[#217346] border-r-2 border-r-[#217346]' : 'bg-[#e6e6e6] text-[#444] border-r border-r-[#b5b5b5]'}`}>{r === 24 ? '' : r}</div>
              {cols.map(c => renderCell(c + r))}
            </React.Fragment>
          ))}
        </div>
        <Chart1 />
        <Chart2 />
        <Overlay />
      </div>
      <div className="ml-[2px] w-[17px] h-[471px] flex flex-col bg-[#dcdcdc]">
        <div className="h-[14px] mt-[3px] bg-white border border-[#9a9a9a] flex items-center justify-center"><svg width="8" height="5" viewBox="0 0 8 5" fill="#666"><path d="M4 0l4 5H0z" /></svg></div>
        <div className="h-[188px] bg-white border border-[#9a9a9a] border-t-0"></div>
        <div className="flex-1"></div>
        <div className="h-[14px] bg-white border border-[#9a9a9a] flex items-center justify-center"><svg width="8" height="5" viewBox="0 0 8 5" fill="#666"><path d="M4 5l4-5H0z" /></svg></div>
      </div>
    </div>
  );
};

const TabBar = () => (
  <div className="h-[28px] bg-[#e6e6e6] border-t border-t-[#a8a8a8] flex items-start shrink-0 text-[12.5px] text-[#555] font-['Open_Sans',sans-serif]">
    <div className="ml-[26px] w-[26px] h-[25px] flex items-center"><svg width="5" height="8" viewBox="0 0 5 8" fill="#c4c4c4"><path d="M5 0v8L0 4z" /></svg></div>
    <div className="w-[47px] h-[25px] flex items-center pl-[3px]"><svg width="5" height="8" viewBox="0 0 5 8" fill="#c4c4c4"><path d="M0 0v8l5-4z" /></svg></div>
    <div className="w-px h-[20px] mt-[3px] bg-[#999]"></div>
    <div className="w-[139px] h-[25px] flex items-center justify-center whitespace-nowrap">Número de tramos</div>
    <div className="w-px h-[20px] mt-[3px] bg-[#999]"></div>
    <div className="w-[67px] h-[25px] flex items-center justify-center whitespace-nowrap">Viga Bi</div>
    <div className="w-[91px] h-[26px] bg-white border-x border-x-[#a8a8a8] border-b-2 border-b-[#217346] mt-[-1px] flex items-center justify-center font-bold text-[#217346] whitespace-nowrap">Esforços Bi</div>
    <div className="w-[51px] h-[25px] flex items-center justify-center">EdBi</div>
    <div className="w-px h-[20px] mt-[3px] bg-[#999]"></div>
    <div className="w-[105px] h-[25px] flex items-center justify-center whitespace-nowrap">Resultados Bi</div>
    <div className="w-px h-[20px] mt-[3px] bg-[#999]"></div>
    <div className="ml-[33px] w-[16px] mt-[4px]"><svg width="17" height="17" viewBox="0 0 17 17" fill="none" stroke="#777"><circle cx="8.500" cy="8.500" r="7.500" /><path d="M8.500 4v9M4 8.500h9" strokeWidth="1.400" /></svg></div>
    <div className="ml-[313px] w-[20px] h-[25px] flex flex-col items-center justify-center gap-[2px]">
      <div className="w-[2px] h-[2px] bg-[#aaa]"></div><div className="w-[2px] h-[2px] bg-[#aaa]"></div><div className="w-[2px] h-[2px] bg-[#aaa]"></div>
    </div>
    <div className="ml-[7px] mt-[6px] w-[394px] h-[15px] bg-[#d6d6d6] flex">
      <div className="w-[15px] bg-white border border-[#777] flex items-center justify-center"><svg width="5" height="8" viewBox="0 0 5 8" fill="#555"><path d="M5 0v8L0 4z" /></svg></div>
      <div className="w-[255px] bg-white border border-[#777] border-l-0"></div>
      <div className="flex-1"></div>
      <div className="w-[15px] bg-white border border-[#777] flex items-center justify-center"><svg width="5" height="8" viewBox="0 0 5 8" fill="#555"><path d="M0 0v8l5-4z" /></svg></div>
    </div>
  </div>
);

const StatusBar = () => (
  <div className="h-[20px] bg-[#f3f2f1] border-t border-t-[#d2d0ce] flex items-stretch shrink-0 text-[11px] text-[#444] font-['Open_Sans',sans-serif]">
    <div className="flex items-center pt-[3px]">
      <span className="ml-[8px] w-[54px]">Pronto</span>
      <svg width="15" height="14" viewBox="0 0 15 14" fill="none" stroke="#555"><path d="M1 1h12M1 4h8M1 7h6M1 10h6" /><circle cx="11" cy="9" r="3.500" /><circle cx="11" cy="9" r="1" fill="#555" /></svg>
      <div className="ml-[17px] w-[16px]">
        <svg width="15" height="15" viewBox="0 0 15 15" fill="none" stroke="#666"><circle cx="6" cy="2" r="1.500" /><path d="M1 5l5 1 5-1M6 6v3l-3 5M6 9l3 5" /><path d="M9 9l5 5M14 9l-5 5" /></svg>
      </div>
      <span className="ml-[1px]">Acessibilidade: investigar</span>
    </div>
    <div className="ml-auto flex items-center">
      <div className="w-[40px] h-full pt-px bg-[#d8d8d8] flex items-center justify-center"><svg width="14" height="12" viewBox="0 0 14 12" fill="none" stroke="#444"><path d="M.5.5h13v11H.5zM.5 4h13M.5 8h13M5 .5v11M9.500.5v11" /></svg></div>
      <div className="w-[40px] pt-px flex items-center justify-center"><svg width="14" height="12" viewBox="0 0 14 12" fill="none" stroke="#444"><path d="M.5.5h13v11H.5zM3 3h8M3 5h8M3 7h8M3 9h8" /></svg></div>
      <div className="w-[40px] pt-px flex items-center justify-center"><svg width="14" height="12" viewBox="0 0 14 12" fill="none" stroke="#444"><path d="M.5.5h13v11H.5zM.5 7h13M6.500.5V7" /></svg></div>
      <div className="ml-[6px] w-[8px] h-px bg-[#444]"></div>
      <div className="relative ml-[5px] w-[100px] h-px bg-[#444]">
        <div className="absolute left-[37px] top-[-5px] w-[5px] h-[10px] bg-[#333]"></div>
        <div className="absolute left-[50px] top-[-2px] w-px h-[5px] bg-[#444]"></div>
      </div>
      <div className="ml-[5px] w-[8px] h-[8px] flex items-center relative"><div className="w-[8px] h-px bg-[#444]"></div><div className="absolute left-[3.500px] top-0 w-px h-[8px] bg-[#444]"></div></div>
      <div className="ml-[13px] w-[35px] text-[#555]">80%</div>
    </div>
  </div>
);

export default function App() {
  return (
    <div className="w-[1360px] h-[726px] overflow-hidden flex flex-col bg-[#e6e6e6] font-['Open_Sans','Noto_Sans',sans-serif]">
      <TitleBar />
      <TabsRow />
      <Ribbon />
      <FormulaBar />
      <Sheet />
      <TabBar />
      <StatusBar />
    </div>
  );
}
